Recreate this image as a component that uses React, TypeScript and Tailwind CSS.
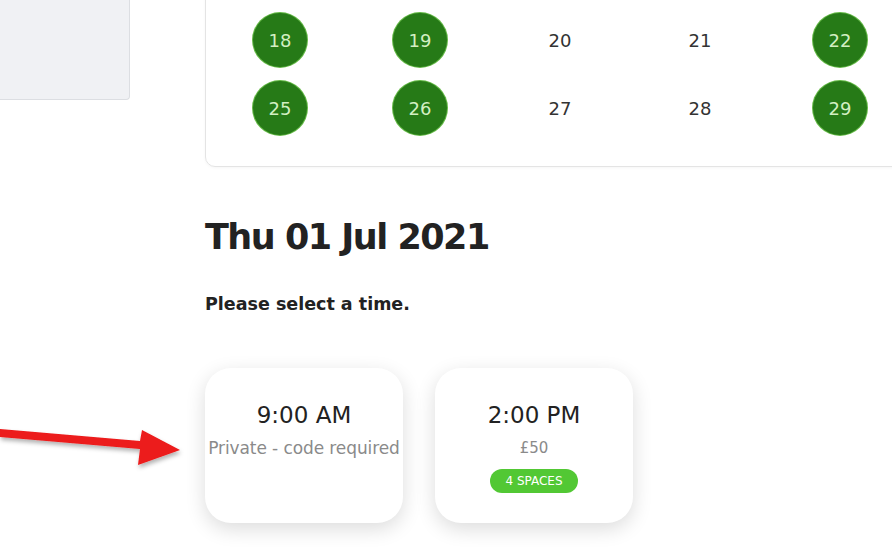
import React from "react";

type Day = { n: number; open: boolean };

// first row only peeks in at the top edge, so its numbers are left out
const topRow = [true, true, false, false, true];

const weeks: Day[][] = [
  [
    { n: 18, open: true },
    { n: 19, open: true },
    { n: 20, open: false },
    { n: 21, open: false },
    { n: 22, open: true },
  ],
  [
    { n: 25, open: true },
    { n: 26, open: true },
    { n: 27, open: false },
    { n: 28, open: false },
    { n: 29, open: true },
  ],
];

function DayCell({ day }: { day: Day }) {
  return (
    <div className="flex h-[68px] w-[140px] items-center justify-center">
      {day.open ? (
        <button className="flex h-[54px] w-[54px] items-center justify-center rounded-full bg-[#267a17] text-[18px] text-[#d3efc2] shadow-[0_0_0_1px_#63b845]">
          {day.n}
        </button>
      ) : (
        <span className="text-[18px] text-[#333]">{day.n}</span>
      )}
    </div>
  );
}

function Arrow() {
  return (
    <svg
      className="absolute left-0 top-[420px]"
      width="190"
      height="60"
      viewBox="0 420 190 60"
    >
      <defs>
        <filter id="sh" x="-10%" y="-30%" width="120%" height="160%">
          <feDropShadow dx="1" dy="3" stdDeviation="2" floodColor="#000" floodOpacity="0.3" />
        </filter>
      </defs>
      <polygon
        points="0,429 140,441 142,430 180,450 138,465 140,449 0,437"
        fill="#ec1a1a"
        filter="url(#sh)"
      />
    </svg>
  );
}

export default function App() {
  return (
    <div
      className="relative h-[560px] w-[892px] overflow-hidden bg-white text-[#222]"
      style={{ fontFamily: '"DejaVu Sans", sans-serif' }}
    >
      <Arrow />
      <div className="flex">
        <div className="w-[205px] shrink-0">
          <div className="h-[100px] w-[130px] rounded-br-[4px] border-b border-r border-[#dcdee2] bg-[#f0f1f4]" />
        </div>

        <div className="shrink-0">
          <div className="mt-[-63px] w-[1000px] rounded-[10px] border border-[#e4e4e4] pb-[24px] pl-[4px] shadow-[0_1px_3px_rgba(0,0,0,0.04)]">
            <div className="flex">
              {topRow.map((open, i) => (
                <div key={i} className="flex h-[68px] w-[140px] items-center justify-center">
                  {open && (
                    <div className="h-[54px] w-[54px] rounded-full bg-[#267a17] shadow-[0_0_0_1px_#63b845]" />
                  )}
                </div>
              ))}
            </div>
            {weeks.map((w, i) => (
              <div key={i} className="flex">
                {w.map((d) => (
                  <DayCell key={d.n} day={d} />
                ))}
              </div>
            ))}
          </div>

          <h1 className="mt-[49px] text-[35px] font-bold leading-[42px] tracking-[-1.5px] text-[#222]">
            Thu 01 Jul 2021
          </h1>
          <p className="mt-[35px] text-[17.5px] font-bold leading-[22px] text-[#222]">
            Please select a time.
          </p>

          <div className="mt-[53px] flex gap-[32px]">
            <div className="flex h-[155px] w-[198px] flex-col items-center rounded-[26px] bg-white pt-[33px] shadow-[0_6px_20px_rgba(0,0,0,0.14)]">
              <div className="text-[23px] leading-[28px] text-[#222]">9:00 AM</div>
              <div className="mt-[8px] whitespace-nowrap text-[17px] leading-[22px] tracking-[-0.1px] text-[#8a8a8a]">
                Private - code required
              </div>
            </div>
            <div className="flex h-[155px] w-[198px] flex-col items-center rounded-[26px] bg-white pt-[33px] shadow-[0_6px_20px_rgba(0,0,0,0.14)]">
              <div className="text-[23px] leading-[28px] text-[#222]">2:00 PM</div>
              <div className="mt-[8px] text-[15px] leading-[22px] text-[#8a8a8a]">£50</div>
              <span className="mt-[10px] flex h-[24px] items-center rounded-full bg-[#52c834] px-[15px] text-[12px] text-white">
                4 SPACES
              </span>
            </div>
          </div>
        </div>
      </div>
    </div>
  );
}
